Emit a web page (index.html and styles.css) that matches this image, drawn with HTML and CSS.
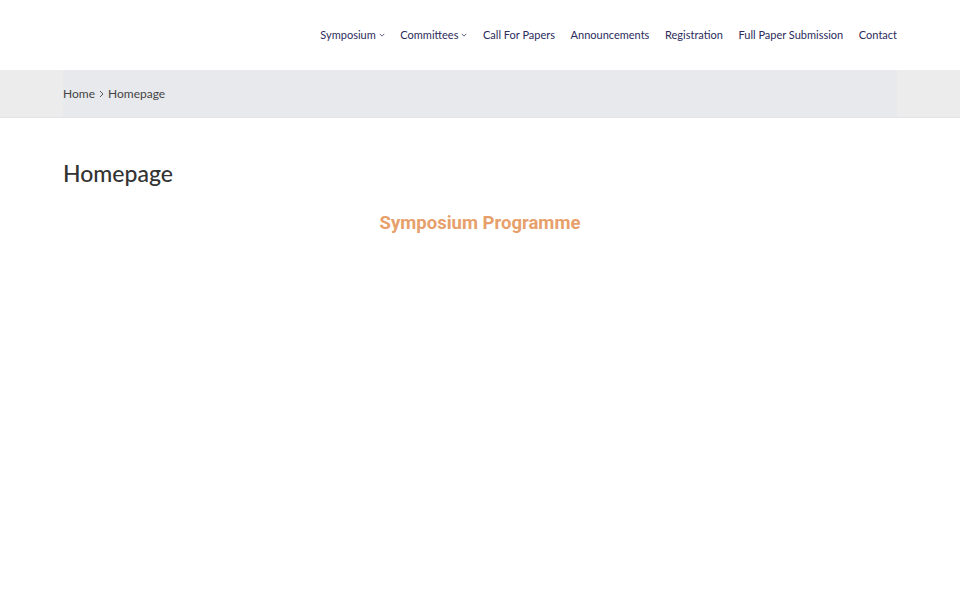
FILE: index.html
```html
<!DOCTYPE html>
<html lang="en">
<head>
<meta charset="utf-8">
<title>Homepage</title>
<link rel="stylesheet" href="styles.css">
</head>
<body>
<header class="site-header">
  <div class="container header-inner">
    <nav class="main-nav">
      <a class="nav-item" href="#">Symposium <svg class="chev" viewBox="0 0 8 5" width="6" height="4"><path d="M1 1l3 3 3-3" fill="none" stroke="currentColor" stroke-width="1"/></svg></a>
      <a class="nav-item" href="#">Committees <svg class="chev" viewBox="0 0 8 5" width="6" height="4"><path d="M1 1l3 3 3-3" fill="none" stroke="currentColor" stroke-width="1"/></svg></a>
      <a class="nav-item" href="#">Call For Papers</a>
      <a class="nav-item" href="#">Announcements</a>
      <a class="nav-item" href="#">Registration</a>
      <a class="nav-item" href="#">Full Paper Submission</a>
      <a class="nav-item" href="#">Contact</a>
    </nav>
  </div>
</header>
<div class="breadcrumb-bar">
  <div class="container breadcrumb-inner">
    <a href="#" class="crumb">Home</a>
    <svg class="crumb-sep" viewBox="0 0 5 8" width="5" height="8"><path d="M1 1l3 3-3 3" fill="none" stroke="currentColor" stroke-width="1"/></svg>
    <span class="crumb">Homepage</span>
  </div>
</div>
<main class="container content">
  <h1 class="page-title">Homepage</h1>
  <h2 class="programme-title">Symposium Programme</h2>
</main>
</body>
</html>
```
FILE: styles.css
```css
* { box-sizing: border-box; }
html, body { margin: 0; padding: 0; background: #fff; }
body { font-family: "Lato", "Open Sans", sans-serif; color: #333; }
a { text-decoration: none; color: inherit; }

.container { width: 834px; margin: 0 auto; }

.site-header { height: 70px; background: #fff; }
.header-inner { height: 69px; display: flex; justify-content: flex-end; align-items: center; }
.main-nav { display: flex; align-items: center; gap: 15.6px; }
.nav-item { font-size: 11px; color: #2b2b5c; display: flex; align-items: center; gap: 3px; line-height: 1; }
.chev { margin-top: 1px; }

.breadcrumb-bar { background: #ececec; border-bottom: 1px solid #e4e4e8; }
.breadcrumb-inner { height: 47px; background: #e8e9ec; display: flex; align-items: center; gap: 4px; font-size: 12px; color: #444; }
.crumb-sep { color: #555; }

.content { padding-top: 41px; }
.page-title { margin: 0; font-size: 23px; font-weight: 500; color: #333; line-height: 28px; }
.programme-title { margin: 25px 0 0; text-align: center; font-family: "Roboto", sans-serif; font-weight: 700; font-size: 18.5px; color: #e7a06b; line-height: 22px; }
```
